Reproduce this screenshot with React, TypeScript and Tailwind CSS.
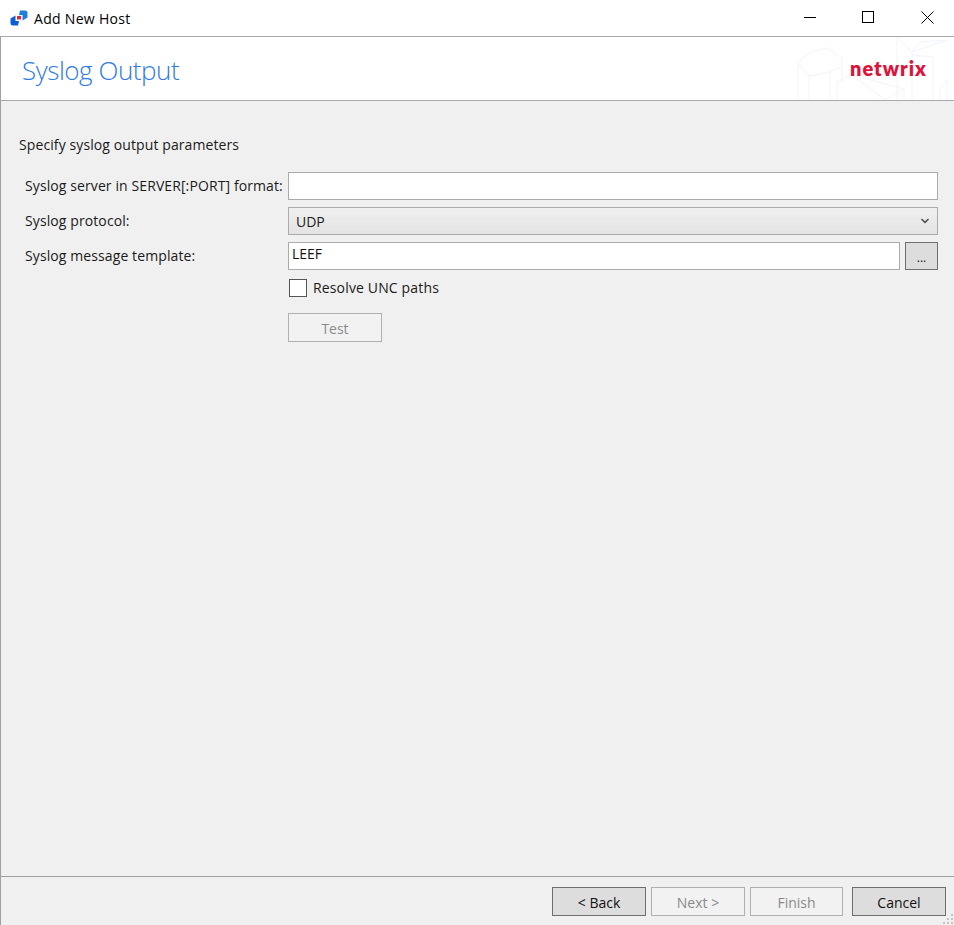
import { ChevronDown } from 'lucide-react';
import type { ReactNode } from 'react';

const font = { fontFamily: '"Open Sans", "Noto Sans", sans-serif' };

function Row({ label, children }: { label?: string; children: ReactNode }) {
  return (
    <div className="flex items-center">
      <div className="w-[263px] shrink-0 pb-px text-[14px] tracking-[0.1px] text-[#1a1a1a]">{label}</div>
      {children}
    </div>
  );
}

function WizardButton({ label, disabled, width = 'w-[94px]' }: { label: string; disabled?: boolean; width?: string }) {
  return (
    <button
      className={
        disabled
          ? `h-[29px] ${width} border border-[#b0b0b0] bg-[#f2f2f2] pt-px text-[14px] text-[#8a8a8a]`
          : `h-[29px] ${width} border border-[#6e6e6e] bg-[#dddddd] pt-px text-[14px] text-[#111111]`
      }
    >
      {label}
    </button>
  );
}

function AppIcon() {
  return (
    <svg width="18" height="18" viewBox="0 0 18 18" className="shrink-0">
      <path d="M0.5 9.5L5.5 6.5V12H9L8 16.5H3Q0.5 16.5 0.5 14Z" fill="#0b5fd3" />
      <path d="M17.5 8.5L12.5 11.5V6H9L10 1.5H15Q17.5 1.5 17.5 4Z" fill="#1c7fe0" />
      <rect x="7" y="7" width="4" height="3.5" fill="#e0263c" />
    </svg>
  );
}

function HeaderArt() {
  return (
    <svg width="164" height="63" viewBox="790 37 164 63" fill="none" stroke="#f0f4fc" strokeWidth="1" className="absolute right-0 top-0">
      <path d="M798 63L810 52L827 48L842 58V66L830 72L809 76Z" />
      <path d="M798 63V100M809 76V100M830 72V100M842 66V82" />
      <path d="M837 82L852 75L904 89V100M837 82V100M852 75L885 100M885 100L904 89" />
      <path d="M897 37L912 52L947 40L920 42L912 52M897 37V100M912 52V100M912 55L933 57V100" />
      <path d="M940 88L947 80V100M940 88V100" />
    </svg>
  );
}

export default function App() {
  return (
    <div className="flex h-[925px] w-[954px] flex-col overflow-hidden bg-white" style={font}>
      {/* title bar */}
      <div className="flex h-[36px] shrink-0 items-center bg-white pl-[10px]">
        <AppIcon />
        <span className="ml-[6px] text-[14px] tracking-[0.3px] text-black">Add New Host</span>
        <div className="ml-auto flex items-center pb-[2px] pr-[4px]">
          <div className="flex h-[34px] w-[46px] items-center justify-center">
            <div className="h-px w-[12px] bg-black" />
          </div>
          <div className="ml-[12px] flex h-[34px] w-[46px] items-center justify-center">
            <div className="h-[12px] w-[12px] border border-black" />
          </div>
          <div className="ml-[13px] flex h-[34px] w-[46px] items-center justify-center">
            <svg width="13" height="13" viewBox="0 0 13 13" stroke="#000" strokeWidth="1">
              <path d="M0.5 0.5l12 12M12.5 0.5l-12 12" />
            </svg>
          </div>
        </div>
      </div>

      {/* page header */}
      <div className="relative flex h-[65px] shrink-0 items-center border-y border-l border-[#a9a9a9] border-l-[#a0a0a0] bg-white pl-[21px] pt-[4px]">
        <HeaderArt />
        <span className="text-[26px] font-light tracking-[-0.45px] text-[#2f7ae5]">Syslog Output</span>
        <span
          className="absolute left-[849px] top-[18px] text-[20px] font-extrabold leading-[26px] tracking-[1px] text-[#dc143c]"
          style={{ fontFamily: '"Lato", sans-serif' }}
        >
          netwrix
        </span>
      </div>

      {/* content */}
      <div className="flex-1 border-l border-[#a0a0a0] bg-[#f0f0f0] pt-[34px]">
        <div className="pl-[18px] text-[14px] leading-[20px] tracking-[0.1px] text-[#1a1a1a]">
          Specify syslog output parameters
        </div>
        <div className="mt-[17px] flex flex-col gap-[7px] pl-[24px] pr-[16px]">
          <Row label="Syslog server in SERVER[:PORT] format:">
            <div className="h-[28px] flex-1 border border-[#ababab] bg-white" />
          </Row>
          <Row label="Syslog protocol:">
            <div className="flex h-[28px] flex-1 items-center justify-between border border-[#ababab] bg-gradient-to-b from-[#f0f0f0] to-[#e3e3e3] pl-[7px] pr-[6px] text-[14px] text-[#1a1a1a]">
              <span>UDP</span>
              <ChevronDown size={12} strokeWidth={3.5} className="text-[#555555]" />
            </div>
          </Row>
          <Row label="Syslog message template:">
            <div className="flex flex-1 gap-[5px]">
              <div className="h-[28px] flex-1 border border-[#ababab] bg-white pl-[3px] text-[14px] leading-[22px] text-[#111111]">
                LEEF
              </div>
              <button className="h-[28px] w-[33px] border border-[#6e6e6e] bg-[#dddddd] text-[12px] leading-[30px] text-[#111111]">
                ...
              </button>
            </div>
          </Row>
          <Row>
            <div className="ml-px flex items-center">
              <div className="h-[18px] w-[18px] border border-[#555555] bg-white" />
              <span className="ml-[6px] text-[14px] tracking-[0.15px] text-[#1a1a1a]">Resolve UNC paths</span>
            </div>
          </Row>
          <Row>
            <button className="mt-[8px] h-[29px] w-[94px] border border-[#b0b0b0] bg-[#f2f2f2] pt-px text-[14px] text-[#8a8a8a]">
              Test
            </button>
          </Row>
        </div>
      </div>

      {/* footer */}
      <div className="relative flex h-[49px] shrink-0 items-start border-t border-l border-[#a0a0a0] bg-[#f0f0f0] pr-[8px] pt-[10px]">
        <div className="ml-auto flex">
          <WizardButton label="< Back" />
          <div className="ml-[5px]">
            <WizardButton label="Next >" disabled />
          </div>
          <div className="ml-[5px]">
            <WizardButton label="Finish" disabled width="w-[93px]" />
          </div>
          <div className="ml-[9px]">
            <WizardButton label="Cancel" />
          </div>
        </div>
        <svg width="12" height="12" viewBox="0 0 12 12" fill="#c4c4c4" className="absolute bottom-0 right-0">
          <rect x="9" y="1" width="2" height="2" />
          <rect x="5" y="5" width="2" height="2" />
          <rect x="9" y="5" width="2" height="2" />
          <rect x="1" y="9" width="2" height="2" />
          <rect x="5" y="9" width="2" height="2" />
          <rect x="9" y="9" width="2" height="2" />
        </svg>
      </div>
    </div>
  );
}
